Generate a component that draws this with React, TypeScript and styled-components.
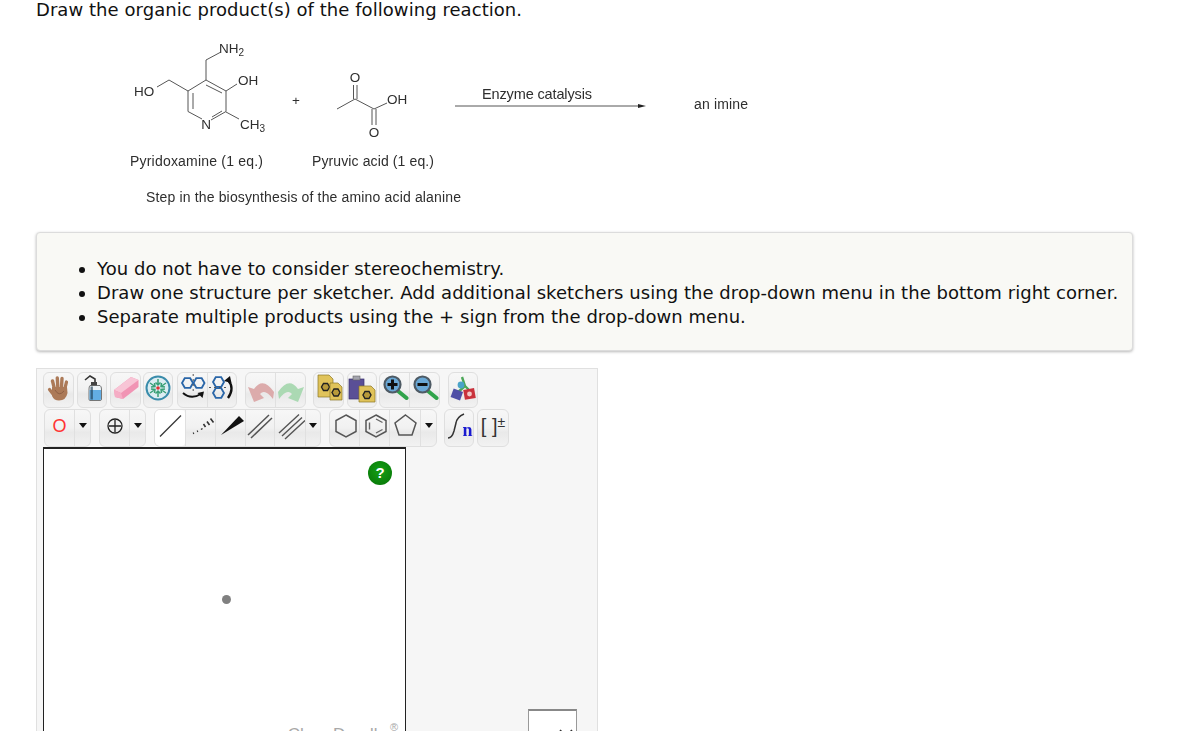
import React from "react";
import styled, { createGlobalStyle } from "styled-components";

const Global = createGlobalStyle`
  html, body { margin: 0; padding: 0; background: #fff; overflow: hidden; height: 731px; }
  body { font-family: "DejaVu Sans", Verdana, sans-serif; }
`;

const Page = styled.div`
  height: 731px;
  overflow: hidden;
  padding-left: 36px;
  box-sizing: border-box;
  color: #111;
`;

const Heading = styled.h1`
  margin: 0;
  font-size: 18px;
  font-weight: 400;
  line-height: 20px;
  height: 30px;
  letter-spacing: 0.055px;
`;

const Scheme = styled.svg`
  display: block;
  width: 660px;
  height: 180px;
  margin-left: 84px;
  filter: blur(0.35px);
  text { font-family: "Liberation Sans", Arial, sans-serif; fill: #2e2e2e; }
  line, polyline { stroke: #555; stroke-width: 1; fill: none; }
`;

const Notice = styled.div`
  box-sizing: border-box;
  width: 1097px;
  height: 119px;
  margin-top: 22px;
  padding: 24px 12px 0 0;
  background: #f9f9f5;
  border: 1px solid #dcdcdc;
  border-radius: 4px;
  box-shadow: 0 1px 3px rgba(0, 0, 0, 0.28);
`;

const NoticeList = styled.ul`
  margin: 0;
  padding: 0 0 0 60px;
  font-size: 18px;
  line-height: 24px;
  letter-spacing: 0.045px;
`;

const Sketcher = styled.div`
  box-sizing: border-box;
  width: 562px;
  height: 400px;
  margin-top: 17px;
  padding: 3px 0 0 6px;
  background: #f6f6f6;
  border: 1px solid #e0e0e0;
  position: relative;
`;

const ToolRow = styled.div<{ $h: number; $pad?: number; $top?: number }>`
  display: flex;
  height: ${(p) => p.$h}px;
  margin-top: ${(p) => p.$top ?? 0}px;
  padding-left: ${(p) => p.$pad ?? 0}px;
`;

const ToolGroup = styled.div<{ $gap?: number }>`
  display: flex;
  box-sizing: border-box;
  margin-left: ${(p) => p.$gap ?? 0}px;
  border: 1px solid #dfdfdf;
  border-radius: 6px;
  background: linear-gradient(#f7f7f7 0%, #f1f1f1 50%, #e9e9e9 62%, #f2f2f2 100%);
  overflow: hidden;
`;

const ToolButton = styled.div<{ $w: number; $active?: boolean; $lift?: number }>`
  display: flex;
  align-items: center;
  justify-content: center;
  box-sizing: border-box;
  width: ${(p) => p.$w}px;
  height: 100%;
  padding-bottom: ${(p) => p.$lift ?? 0}px;
  background: ${(p) => (p.$active ? "#fff" : "transparent")};
  border-radius: ${(p) => (p.$active ? "4px" : "0")};
  & + & { border-left: 1px solid #e0e0e0; }
  svg { display: block; flex-shrink: 0; filter: blur(0.3px); }
`;

const Caret = styled.span`
  width: 0;
  height: 0;
  border-left: 4.5px solid transparent;
  border-right: 4.5px solid transparent;
  border-top: 5px solid #111;
`;

const AtomLabel = styled.span`
  font-family: "Liberation Sans", Arial, sans-serif;
  font-size: 18px;
  line-height: 1;
  color: #f33;
`;

const Canvas = styled.div`
  position: relative;
  box-sizing: border-box;
  width: 363px;
  height: 360px;
  background: #fff;
  border: 1px solid #222;
  border-top-width: 2px;
`;

const HelpBadge = styled.span`
  position: absolute;
  top: 12px;
  right: 13px;
  width: 24px;
  height: 24px;
  border-radius: 50%;
  background: radial-gradient(circle at 50% 40%, #15a015, #067206);
  color: #fff;
  font: 700 15px/24px "Liberation Sans", Arial, sans-serif;
  text-align: center;
`;

const CenterDot = styled.span`
  position: absolute;
  top: 146px;
  left: 178px;
  width: 9px;
  height: 9px;
  border-radius: 50%;
  background: #808080;
`;

const Watermark = styled.span`
  position: absolute;
  top: 275px;
  right: 18px;
  font: 400 17px/22px "Liberation Sans", Arial, sans-serif;
  color: #a8a8a8;
  white-space: nowrap;
`;

const Registered = styled.sup`
  font-size: 11px;
  position: absolute;
  top: -8px;
  right: -11px;
`;

const OverflowBox = styled.div`
  position: absolute;
  left: 491px;
  top: 340px;
  box-sizing: border-box;
  width: 49px;
  height: 40px;
  display: flex;
  justify-content: flex-end;
  padding: 18px 3px 0 0;
  background: #fff;
  border: 1px solid #999;
  border-top: 2px solid #888;
`;

const Icon = ({ children, w = 30, h = 34 }: { children: React.ReactNode; w?: number; h?: number }) => (
  <svg width={w} height={h} viewBox={`0 0 ${w} ${h}`}>
    {children}
  </svg>
);

const Hand = () => (
  <Icon>
    <g stroke="#ac7a58" strokeLinecap="round" fill="none">
      <path d="M10 14 L8.5 8" strokeWidth="3.4" />
      <path d="M13.8 14 L13.3 5" strokeWidth="3.4" />
      <path d="M17.5 14 L18 5.5" strokeWidth="3.4" />
      <path d="M21 15 L22.5 9" strokeWidth="3.2" />
      <path d="M9 21 L5.5 16.5" strokeWidth="3.2" />
    </g>
    <path d="M8 14 H23 L23.5 20 Q22 27.5 15 27.5 Q10 27.5 8 23 Z" fill="#ac7a58" />
    <path d="M11 17 Q15 24 20 18" stroke="#8e6044" fill="none" strokeWidth="1" />
  </Icon>
);

const Bottle = () => (
  <Icon>
    <path d="M8 7 L13 3 L18 6 V11" stroke="#333" strokeWidth="1.6" fill="none" />
    <rect x="14" y="9" width="6" height="4" fill="#444" />
    <path d="M13 12.5 H23 Q24.5 13.5 24.5 16 V26 Q24.5 27.5 23 27.5 H13 Q12 27.5 12 26 V16 Q12 13.5 13 12.5 Z" fill="#eef4f8" stroke="#555" strokeWidth="0.8" />
    <path d="M12.5 17 H24 V26 Q24 27 23 27 H13 Q12.5 27 12.5 26 Z" fill="#62ade4" />
    <rect x="13.5" y="13.5" width="2.4" height="13" fill="#1d3a50" opacity="0.65" />
  </Icon>
);

const Eraser = () => (
  <Icon>
    <polygon points="3,17 20,4 27.5,7 27.5,14 12,26 4,24" fill="#f194b4" />
    <polygon points="3,17 20,4 27.5,7 10,20" fill="#f8c5d6" />
    <polygon points="3,17 10,20 12,26 4,24" fill="#f5adc5" />
  </Icon>
);

const Clean = () => (
  <Icon>
    <circle cx="15" cy="15" r="11.5" fill="#dcedf2" stroke="#3a8cab" strokeWidth="2" />
    <g stroke="#3aa077" strokeWidth="1.5" fill="none">
      <path d="M15 6 V12 M12.5 9.5 L15 12 L17.5 9.5" />
      <path d="M15 24 V18 M12.5 20.5 L15 18 L17.5 20.5" />
      <path d="M7 10 L12 13.5 M8 14 L12 13.5 L11.5 10" />
      <path d="M23 10 L18 13.5 M22 14 L18 13.5 L18.5 10" />
      <path d="M7 20 L12 16.5 M8 16 L12 16.5 L11.5 20" />
      <path d="M23 20 L18 16.5 M22 16 L18 16.5 L18.5 20" />
    </g>
    <circle cx="15" cy="15" r="1.8" fill="#e03030" />
  </Icon>
);

const hex = (x: number, y: number, r: number) =>
  [0, 1, 2, 3, 4, 5]
    .map((i) => {
      const a = (Math.PI / 3) * i;
      return `${(x + r * Math.cos(a)).toFixed(1)},${(y + r * Math.sin(a)).toFixed(1)}`;
    })
    .join(" ");

const FlipH = () => (
  <Icon>
    <polygon points={hex(9.5, 10, 5.5)} fill="none" stroke="#2a66a8" strokeWidth="1.8" />
    <polygon points={hex(21, 10, 5.5)} fill="none" stroke="#2a66a8" strokeWidth="1.8" />
    <path d="M15.2 1 V19" stroke="#555" strokeWidth="1" strokeDasharray="2 3" />
    <path d="M5 20 Q13 27 23 21" stroke="#111" strokeWidth="2" fill="none" />
    <path d="M19.5 20 L26 18.5 L24.5 25 Z" fill="#111" />
  </Icon>
);

const FlipV = () => (
  <Icon>
    <polygon points={hex(11.5, 9, 5.5)} fill="none" stroke="#2a66a8" strokeWidth="1.8" />
    <polygon points={hex(11.5, 20, 5.5)} fill="none" stroke="#2a66a8" strokeWidth="1.8" />
    <path d="M2 14.5 H19" stroke="#555" strokeWidth="1" strokeDasharray="2 3" />
    <path d="M21 7 Q28 15 21 25" stroke="#111" strokeWidth="2.4" fill="none" />
    <path d="M17 8 L23 3 L24.5 10 Z" fill="#111" />
  </Icon>
);

const Undo = () => (
  <Icon>
    <path d="M8 29 L2 14 L8 16 Q17 3 28 19 L27 26 Q19 15 14 21 L18 25 Z" fill="#dcabab" />
  </Icon>
);

const Redo = () => (
  <Icon>
    <path d="M22 29 L28 14 L22 16 Q13 3 2 19 L3 26 Q11 15 16 21 L12 25 Z" fill="#abd9b3" />
  </Icon>
);

const GoldDoc = ({ x, y, w, h }: { x: number; y: number; w: number; h: number }) => (
  <g transform={`translate(${x} ${y})`}>
    <path d={`M0 0 H${w - 4} L${w} 4 V${h} H0 Z`} fill="#e0c35a" stroke="#8a7526" strokeWidth="0.7" />
    <polygon points={hex(w / 2, h / 2 + 1, 4)} fill="#b89a3a" stroke="#222" strokeWidth="1.4" />
  </g>
);

const Copy = () => (
  <Icon>
    <GoldDoc x={4} y={2} w={15} h={22} />
    <GoldDoc x={16} y={10} w={12} h={17} />
  </Icon>
);

const Paste = () => (
  <Icon>
    <rect x="2" y="6" width="15" height="20" fill="#5a4f96" stroke="#3a3270" strokeWidth="0.7" />
    <rect x="6" y="3" width="7" height="4" fill="#a3a3ad" stroke="#666" strokeWidth="0.6" />
    <GoldDoc x={12} y={13} w={16} h={16} />
  </Icon>
);

const Magnifier = ({ minus }: { minus?: boolean }) => (
  <Icon>
    <path d="M18 18 L26.5 25" stroke="#2fa34a" strokeWidth="4" strokeLinecap="round" />
    <circle cx="12.5" cy="11.5" r="8" fill="#6aa8d6" stroke="#4e5a64" strokeWidth="2.2" />
    <rect x="7.5" y="10" width="10" height="3" fill="#111" />
    {!minus && <rect x="11" y="6.5" width="3" height="10" fill="#111" />}
  </Icon>
);

const Perspective = () => (
  <Icon>
    <path d="M14 4 L17 13 L9 20 M17 13 L24 20" stroke="#4ca758" strokeWidth="2.4" fill="none" />
    <circle cx="13" cy="12" r="3.4" fill="#4aa3c8" />
    <rect x="4" y="17" width="10" height="9" fill="#4f4fa6" transform="rotate(20 9 21)" />
    <rect x="16" y="16" width="11" height="10" fill="#c9323c" transform="rotate(-10 21 21)" />
    <circle cx="21.5" cy="21" r="2.4" fill="#f2c6c6" />
  </Icon>
);

const Charge = () => (
  <svg width="20" height="20" viewBox="0 0 20 20">
    <circle cx="10" cy="10" r="7" fill="none" stroke="#222" strokeWidth="1.3" />
    <path d="M10 4 V16 M4 10 H16" stroke="#222" strokeWidth="1.3" />
  </svg>
);

const BondSingle = () => (
  <Icon h={36}>
    <path d="M5 28.5 L26 7.5" stroke="#333" strokeWidth="1.3" />
  </Icon>
);
const BondDashed = () => (
  <Icon h={36}>
    <path d="M7 25.5 L8 25 M11 23.5 L12 23 M15 21.5 L16.5 20.5" stroke="#333" strokeWidth="1.5" />
    <path d="M17.5 16 L19.5 19 M21 13.5 L23.5 17 M24.5 10.5 L27.5 14.5" stroke="#333" strokeWidth="1.6" />
  </Icon>
);
const BondWedge = () => (
  <Icon h={36}>
    <path d="M5 27 L23 8 L28 13 Z" fill="#111" />
  </Icon>
);
const BondDouble = () => (
  <Icon h={36}>
    <path d="M3 27 L24 7 M6 30 L27 10" stroke="#555" strokeWidth="1.5" />
  </Icon>
);
const BondTriple = () => (
  <Icon h={36}>
    <path d="M4 25 L24 6.5 M7 28 L27 9.5 M10 31 L30 12.5" stroke="#555" strokeWidth="1.4" />
  </Icon>
);
const Ring = ({ kind }: { kind: "hex" | "benz" | "pent" }) => (
  <Icon h={36}>
    {kind === "pent" ? (
      <polygon points="15.5,7 26,15 22,27 9,27 5,15" fill="none" stroke="#555" strokeWidth="1.5" />
    ) : (
      <polygon points="16,7 26,12.5 26,23.5 16,29 6,23.5 6,12.5" fill="none" stroke="#555" strokeWidth="1.5" />
    )}
    {kind === "benz" && (
      <path d="M16 11 L22.5 14.5 M22.5 21.5 L16 25 M9.5 21.5 V14.5" stroke="#666" strokeWidth="1.4" />
    )}
  </Icon>
);

const RepeatUnit = () => (
  <svg width="30" height="36" viewBox="0 0 30 36">
    <path d="M4 30 Q8 30 10 23 L12 15 Q13 9 20 6" stroke="#333" strokeWidth="1.5" fill="none" />
    <text x="18.5" y="28" fontFamily="'Liberation Serif', serif" fontWeight="700" fontSize="18" fill="#1a1ad0">
      n
    </text>
  </svg>
);

const Brackets = styled.span`
  font: 400 20px/1 "Liberation Sans", sans-serif;
  color: #333;
  white-space: nowrap;
  sup { font-size: 14px; line-height: 0; vertical-align: 6px; }
`;

const T = (p: { x: number; y: number; s?: number; a?: "middle" | "start"; children: React.ReactNode; len?: number }) => (
  <text
    x={p.x}
    y={p.y}
    fontSize={p.s ?? 13.5}
    textAnchor={p.a ?? "start"}
    textLength={p.len}
    lengthAdjust={p.len ? "spacing" : undefined}
  >
    {p.children}
  </text>
);

const ReactionScheme = () => (
  <Scheme viewBox="120 30 660 180">
    <polyline points="220,52.5 206,60 206,80" />
    <polyline points="202,119 188,111.5 188,91 206,80 226,91 226,111.5 211,120" />
    <line x1="206" y1="85" x2="222" y2="93" />
    <line x1="212" y1="117" x2="222" y2="111" />
    <line x1="193" y1="93" x2="193" y2="109" />
    <polyline points="157,87 169,80 188,91" />
    <line x1="226" y1="91" x2="237" y2="84" />
    <line x1="226" y1="112" x2="239" y2="119" />
    <T x={219} y={53}>NH<tspan fontSize="10" dy="3">2</tspan></T>
    <T x={238} y={85}>OH</T>
    <T x={134} y={96}>HO</T>
    <T x={206} y={129} a="middle">N</T>
    <T x={240} y={129}>CH<tspan fontSize="10" dy="3">3</tspan></T>
    <T x={296} y={105} a="middle">+</T>

    <polyline points="337,109 355,99 374,109 387,103" />
    <line x1="353.5" y1="85" x2="353.5" y2="99" />
    <line x1="357" y1="85" x2="357" y2="99" />
    <line x1="372" y1="109" x2="372" y2="125" />
    <line x1="376" y1="109" x2="376" y2="125" />
    <T x={355} y={82} a="middle">O</T>
    <T x={374} y={137} a="middle">O</T>
    <T x={387} y={104}>OH</T>

    <T x={130} y={166} s={14} len={133}>Pyridoxamine (1 eq.)</T>
    <T x={312} y={166} s={14} len={122}>Pyruvic acid (1 eq.)</T>
    <T x={146} y={202} s={14} len={315}>Step in the biosynthesis of the amino acid alanine</T>
    <T x={482} y={99} s={14.5} len={110}>Enzyme catalysis</T>
    <T x={694} y={109} s={14} len={54}>an imine</T>
    <line x1="455" y1="106" x2="640" y2="106" />
    <polygon points="638,104 646,106 638,108" fill="#222" />
  </Scheme>
);

export default function App() {
  return (
    <Page>
      <Global />
      <Heading>Draw the organic product(s) of the following reaction.</Heading>
      <ReactionScheme />
      <Notice>
        <NoticeList>
          <li>You do not have to consider stereochemistry.</li>
          <li>Draw one structure per sketcher. Add additional sketchers using the drop-down menu in the bottom right corner.</li>
          <li>Separate multiple products using the + sign from the drop-down menu.</li>
        </NoticeList>
      </Notice>
      <Sketcher>
        <ToolRow $h={36}>
          <ToolGroup><ToolButton $w={29}><Hand /></ToolButton></ToolGroup>
          <ToolGroup $gap={3}><ToolButton $w={28}><Bottle /></ToolButton></ToolGroup>
          <ToolGroup $gap={3}><ToolButton $w={29}><Eraser /></ToolButton></ToolGroup>
          <ToolGroup $gap={2}><ToolButton $w={28}><Clean /></ToolButton></ToolGroup>
          <ToolGroup $gap={4}>
            <ToolButton $w={29}><FlipH /></ToolButton>
            <ToolButton $w={29}><FlipV /></ToolButton>
          </ToolGroup>
          <ToolGroup $gap={8}>
            <ToolButton $w={29}><Undo /></ToolButton>
            <ToolButton $w={30}><Redo /></ToolButton>
          </ToolGroup>
          <ToolGroup $gap={7}><ToolButton $w={29}><Copy /></ToolButton></ToolGroup>
          <ToolGroup $gap={3}><ToolButton $w={28}><Paste /></ToolButton></ToolGroup>
          <ToolGroup $gap={2}>
            <ToolButton $w={29}><Magnifier /></ToolButton>
            <ToolButton $w={30}><Magnifier minus /></ToolButton>
          </ToolGroup>
          <ToolGroup $gap={8}><ToolButton $w={28}><Perspective /></ToolButton></ToolGroup>
        </ToolRow>
        <ToolRow $h={38} $pad={1} $top={1}>
          <ToolGroup>
            <ToolButton $w={29} $lift={5}><AtomLabel>O</AtomLabel></ToolButton>
            <ToolButton $w={16} $lift={5}><Caret /></ToolButton>
          </ToolGroup>
          <ToolGroup $gap={8}>
            <ToolButton $w={29} $lift={5}><Charge /></ToolButton>
            <ToolButton $w={16} $lift={5}><Caret /></ToolButton>
          </ToolGroup>
          <ToolGroup $gap={8}>
            <ToolButton $w={30} $lift={5} $active><BondSingle /></ToolButton>
            <ToolButton $w={30} $lift={5}><BondDashed /></ToolButton>
            <ToolButton $w={30} $lift={5}><BondWedge /></ToolButton>
            <ToolButton $w={29} $lift={5}><BondDouble /></ToolButton>
            <ToolButton $w={31} $lift={5}><BondTriple /></ToolButton>
            <ToolButton $w={15} $lift={5}><Caret /></ToolButton>
          </ToolGroup>
          <ToolGroup $gap={8}>
            <ToolButton $w={29} $lift={5}><Ring kind="hex" /></ToolButton>
            <ToolButton $w={30} $lift={5}><Ring kind="benz" /></ToolButton>
            <ToolButton $w={31} $lift={5}><Ring kind="pent" /></ToolButton>
            <ToolButton $w={16} $lift={5}><Caret /></ToolButton>
          </ToolGroup>
          <ToolGroup $gap={7}><ToolButton $w={28} $lift={5}><RepeatUnit /></ToolButton></ToolGroup>
          <ToolGroup $gap={3}>
            <ToolButton $w={30} $lift={5}><Brackets>[ ]<sup>±</sup></Brackets></ToolButton>
          </ToolGroup>
        </ToolRow>
        <Canvas>
          <HelpBadge>?</HelpBadge>
          <CenterDot />
          <Watermark>
            ChemDoodle<Registered>®</Registered>
          </Watermark>
        </Canvas>
        <OverflowBox>
          <svg width="14" height="8" viewBox="0 0 14 8">
            <path d="M1 1 L7 7 L13 1" fill="none" stroke="#333" strokeWidth="1.5" />
          </svg>
        </OverflowBox>
      </Sketcher>
    </Page>
  );
}
